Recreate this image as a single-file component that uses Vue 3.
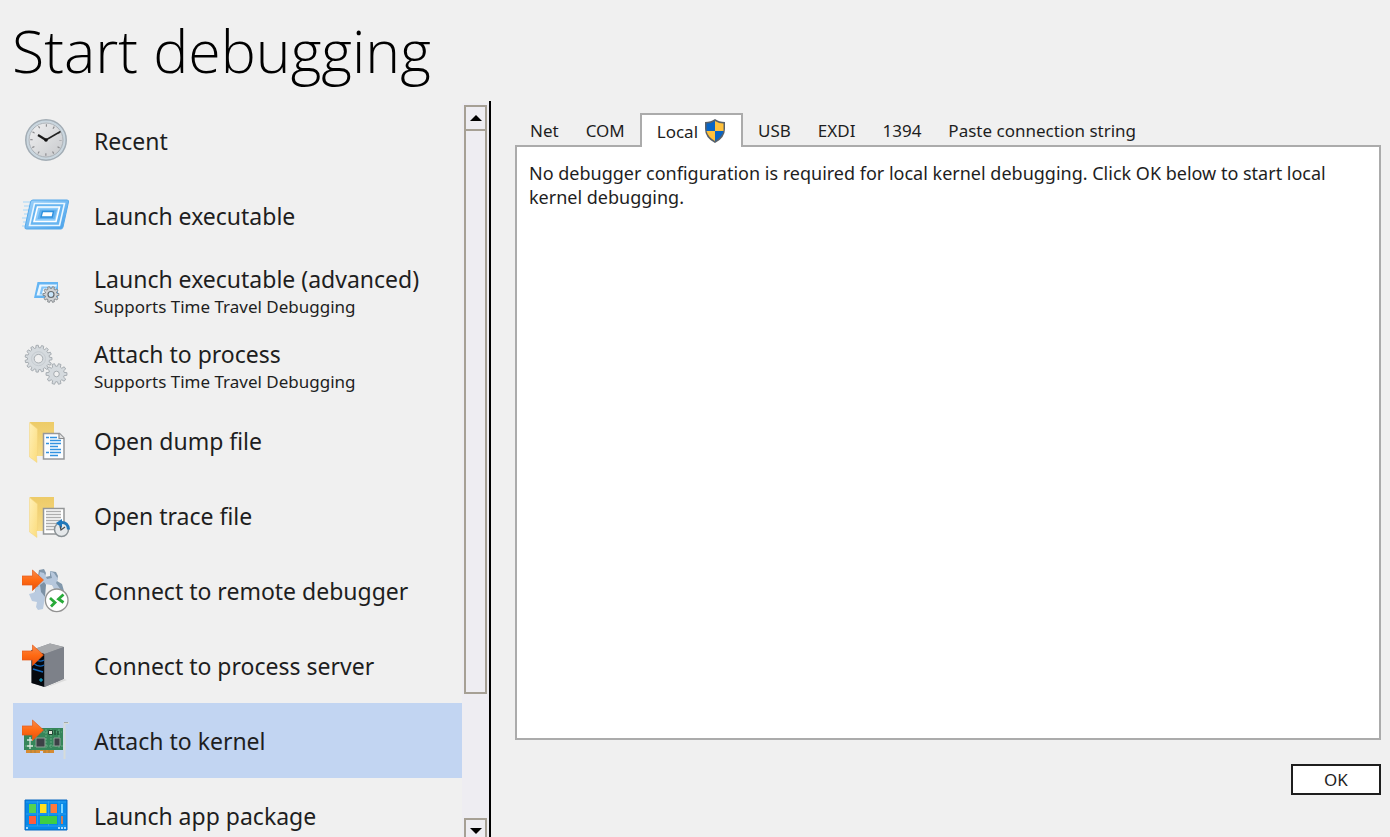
<script setup>
import { ref } from 'vue'

const items = [
  { id: 'recent', label: 'Recent' },
  { id: 'launch', label: 'Launch executable' },
  { id: 'advanced', label: 'Launch executable (advanced)', note: 'Supports Time Travel Debugging' },
  { id: 'process', label: 'Attach to process', note: 'Supports Time Travel Debugging' },
  { id: 'dump', label: 'Open dump file' },
  { id: 'trace', label: 'Open trace file' },
  { id: 'remote', label: 'Connect to remote debugger' },
  { id: 'server', label: 'Connect to process server' },
  { id: 'kernel', label: 'Attach to kernel' },
  { id: 'package', label: 'Launch app package' }
]
const tabs = ['Net', 'COM', 'Local', 'USB', 'EXDI', '1394', 'Paste connection string']
const selected = ref('kernel')
const activeTab = ref('Local')

function gear(cx, cy, outer, inner, teeth) {
  const points = []
  const step = (Math.PI * 2) / teeth
  for (let i = 0; i < teeth; i++) {
    const a = i * step
    for (const [offset, r] of [[-0.32, inner], [-0.2, outer], [0.2, outer], [0.32, inner]]) {
      const t = a + offset * step
      points.push(`${(cx + Math.cos(t) * r).toFixed(2)},${(cy + Math.sin(t) * r).toFixed(2)}`)
    }
  }
  return points.join(' ')
}
</script>

<template>
  <main class="page">
    <h1>Start debugging</h1>
    <div class="content">
      <nav class="sidebar" aria-label="Debugging options">
        <div class="list">
          <button
            v-for="item in items"
            :key="item.id"
            type="button"
            class="item"
            :class="{ selected: selected === item.id }"
            @click="selected = item.id"
          >
            <svg class="icon" viewBox="0 0 48 48" aria-hidden="true">
              <defs>
                <linearGradient :id="item.id + '-arrow'" x1="0" y1="0" x2="0" y2="1">
                  <stop offset="0" stop-color="#f58a4c" /><stop offset=".5" stop-color="#ff6a13" /><stop offset="1" stop-color="#e9500b" />
                </linearGradient>
                <linearGradient :id="item.id + '-folder'" x1="0" y1="0" x2="0" y2="1">
                  <stop offset="0" stop-color="#edcb68" /><stop offset="1" stop-color="#f7dc88" />
                </linearGradient>
                <linearGradient :id="item.id + '-flap'" x1="0" y1="0" x2="1" y2="1">
                  <stop offset="0" stop-color="#fff0b8" /><stop offset="1" stop-color="#fbdc7c" />
                </linearGradient>
                <linearGradient :id="item.id + '-blue'" x1="0" y1="0" x2="1" y2="1">
                  <stop offset="0" stop-color="#9ed3fb" /><stop offset="1" stop-color="#46a0ea" />
                </linearGradient>
                <linearGradient :id="item.id + '-face'" x1="0" y1="0" x2="1" y2="1">
                  <stop offset="0" stop-color="#f2f2f3" /><stop offset="1" stop-color="#c6c8cb" />
                </linearGradient>
              </defs>

              <g v-if="item.id === 'recent'">
                <circle cx="24" cy="24" r="20" fill="none" stroke="#a3adb5" stroke-width="2" />
                <circle cx="24" cy="24" r="18.5" fill="url(#recent-face)" stroke="#c9d6df" stroke-width="2" />
                <circle cx="24" cy="24" r="17" fill="none" stroke="#a9b1b8" />
                <circle cx="24" cy="24" r="14.5" fill="none" stroke="#8b8b8e" stroke-width="2.4" stroke-dasharray="1.2 6.39" stroke-dashoffset=".6" />
                <path d="M16 19l8 5" stroke="#1b1b1b" stroke-width="2.2" />
                <path d="M23 24.500l15.500-9" stroke="#222" stroke-width="1.500" />
                <circle cx="24" cy="24" r="1.800" fill="#111" />
              </g>

              <g v-else-if="item.id === 'launch'">
                <path d="M1 11h9M2 15h7M1 19h7M2 23h6M0 27h7M1 31h5M0 35h5" stroke="#a9d7fa" stroke-width="1.500" opacity=".7" />
                <path d="M11 9h34q2 0 1.500 2l-5.500 25q-.5 2-2 2H4.500q-2 0-1.500-2l5.500-25q.5-2 2.500-2z" fill="url(#launch-blue)" stroke="#56a9ea" />
                <path d="M12.500 12.500h30l-5 22H7.500z" fill="#67b5f1" stroke="#e8f6ff" stroke-width="1.600" />
                <path d="M15.500 16h22l-3.500 14.500H12z" fill="#8dccfb" stroke="#fff" stroke-width="1.600" />
                <path d="M18 18.500h17l-2.500 9.500H15.500z" fill="#65b2ef" />
                <path d="M20.500 20.500h11l-1.200 5.500H19z" fill="#fff" stroke="#2f92df" stroke-width="1.400" />
              </g>

              <g v-else-if="item.id === 'advanced'">
                <path d="M15.500 16H36v16H12z" fill="#65b5f3" />
                <path d="M17.500 18.500H35l-3 11H14.500z" fill="#e9f6ff" />
                <path d="M19.500 20.500H34l-2 8H17.500z" fill="#84c5f7" />
                <path d="M21.500 22.500H33l-2 5H20z" fill="#f8fcff" />
                <polygon :points="gear(29, 28.5, 8, 6, 10)" fill="#d0d3d5" stroke="#84898d" />
                <circle cx="29" cy="28.500" r="3" fill="#c9e5fa" stroke="#64696d" stroke-width="1.200" />
              </g>

              <g v-else-if="item.id === 'process'" fill="#d5dade" stroke="#a7adb2">
                <polygon :points="gear(16.500, 17.700, 13.500, 11, 15)" />
                <circle cx="16.500" cy="17.700" r="7" fill="none" stroke="#c6ccd1" />
                <circle cx="16.500" cy="17.700" r="4.300" fill="#f0f0f0" />
                <polygon :points="gear(34.500, 33, 10.500, 7.800, 10)" />
                <circle cx="34.500" cy="33" r="2.800" fill="#f0f0f0" />
              </g>

              <g v-else-if="item.id === 'dump' || item.id === 'trace'">
                <path d="M8 6h24v34H13z" :fill="`url(#${item.id}-folder)`" />
                <path d="M7.500 6.500l8 6.500v26l-1 1 .5 6.500-7.500-5.500z" :fill="`url(#${item.id}-flap)`" stroke="#f2d27b" stroke-width=".5" />
                <g v-if="item.id === 'dump'">
                  <path d="M21.500 17.500h16l4.500 4.500v21H21.500z" fill="#fbfdff" stroke="#96989a" stroke-width="1.500" />
                  <path d="M37 17.500v5h5" fill="#e1e1e1" stroke="#8b8c8e" stroke-width="1.200" />
                  <path d="M24 21.500h3M28 21.500h7M28 24.500h11M24 27.500h3M28 27.500h11M28 30.500h8M28 33.500h11M24 36.500h3M28 36.500h11M28 39.500h8" stroke="#3292e0" stroke-width="1.500" />
                </g>
                <g v-else>
                  <path d="M21.500 17.500H42V43H21.500z" fill="#fff" stroke="#949698" stroke-width="1.500" />
                  <path d="M24 20.500h15M24 23.500h15M24 26.500h15M24 29.500h15M24 32.500h11M24 35.500h9M24 38.500h8" stroke="#adadad" stroke-width="1.300" />
                  <circle cx="39.500" cy="38.500" r="7" fill="#e5e8ea" stroke="#8b9296" stroke-width="1.500" />
                  <path d="M39 31.500q7-.5 7.500 7" fill="none" stroke="#2177b8" stroke-width="3" />
                  <path d="M34 32l6-4v9z" fill="#1c78bf" />
                  <path d="M38 35l1 4 4-3" fill="none" stroke="#454b50" stroke-width="1.300" />
                </g>
              </g>

              <g v-else-if="item.id === 'remote'">
                <path d="M17 4l5-1 2 4-1 4 5-1v-5l6 1 2 4-1 5 5 3 2 7-7 1-3-6-7-3-5 5-1 10-6-5z" fill="#8298ac" />
                <path d="M18 6l4 1 3 6 5-1-2-7 4 2 4 6-2 4 5 7-6 1-3-6-8-1-3 6-4-5z" fill="#b6c7dc" />
                <path d="M11 20l8 1v4l4 6-1 6-1 6-5 1-2-3 1-5-5-1-3-7 4-1 3-2z" fill="#bacbe0" />
                <path d="M18 19l4-3 2 3-1 12-4-5z" fill="#7b91a5" />
                <circle cx="34.700" cy="34.300" r="11.300" fill="#fff" stroke="#929292" stroke-width="1.300" />
                <path d="M28 32l5 4.500-4 4M41.500 28.500l-5 4.500 5 3.500" fill="none" stroke="#28aa39" stroke-width="2.800" />
              </g>

              <g v-else-if="item.id === 'server'">
                <path d="M9.500 9L28 2.500 42 6v32l-19.500 8-13-4z" fill="#858991" />
                <path d="M9.500 9L28 2.500 42 6l-19.500 7z" fill="#a7a9ac" />
                <path d="M9.500 9l13 4v33l-13-4z" fill="#05080d" />
                <path d="M22.500 13L42 6v32l-19.500 8z" fill="#7d8189" />
                <path d="M11 17q6 5 11 2M11 22q6 5 11 2M11 28l10 3" fill="none" stroke="#1267bc" stroke-width="1.400" />
                <path d="M19 37v4M17 39h4" stroke="#18b8e7" />
                <path d="M42 38l3 1-22 8z" fill="#dcdcdc" />
              </g>

              <g v-else-if="item.id === 'kernel'">
                <path d="M4 33h28v4H4z" fill="#d78b32" />
                <path d="M9 33v4M13 33v4M23 33v4M27 33v4" stroke="#a9823b" />
                <path d="M18 35h3v3h-3z" fill="#c3d4f2" />
                <path d="M2 12h39v22H2z" fill="#35865a" />
                <path d="M3 16h37M24 13v19M29 13v19M37 13v19M3 30h38" stroke="#73b48a" stroke-width=".8" stroke-dasharray="2 1" />
                <path d="M14 22h9v9h-9zM32 22h6v8h-6z" fill="#3c4146" stroke="#8fa097" />
                <path d="M26.500 14.500h4v4h-4z" fill="#e1e4d9" stroke="#1f4532" />
                <path d="M5 24h6M8 21v6M5 30h6M8 27v6" stroke="#d6e5dc" stroke-width="1.300" />
                <path d="M33 14v5M36 15v4" stroke="#20553a" stroke-width="1.500" />
                <path d="M47 7h-4.500v36" fill="none" stroke="#d6dcd9" stroke-width="2" />
                <path d="M46 6.500h-4" stroke="#8b9492" stroke-width=".7" />
              </g>

              <g v-else>
                <path d="M3 9h42v30H3z" fill="#0789e8" stroke="#0868c3" />
                <path d="M4 11h40M4 23h40M4 35h40M15.500 10v25M26.500 10v25M37 10v25" stroke="#31a4f3" stroke-width=".8" />
                <path d="M7 13h7v9H7z" fill="#55d252" /><path d="M18 13h6.500v9H18z" fill="#ffdf1d" />
                <path d="M28.500 13H35v9h-6.500z" fill="#ff7939" /><path d="M39 13h2v9h-2z" fill="#7dd5ff" />
                <path d="M7 25h7v8H7z" fill="#ff5b3e" /><path d="M18 25h17v8H18z" fill="#3dce45" />
                <path d="M39 25h2v8h-2z" fill="#ce7c56" />
                <path d="M4 37h2M36 37h2M39 37h2M42 37h2" stroke="#e3f5ff" stroke-width="1.300" />
              </g>

              <path
                v-if="['remote', 'server', 'kernel'].includes(item.id)"
                d="M0 10h10.500V4l11 10-11 10.500V19H0z"
                :fill="`url(#${item.id}-arrow)`"
                stroke="#e75a18"
                stroke-width=".7"
              />
            </svg>
            <span class="caption">
              <span class="label">{{ item.label }}</span>
              <span v-if="item.note" class="note">{{ item.note }}</span>
            </span>
          </button>
        </div>
        <div class="scrollbar">
          <button type="button" class="step up" aria-label="Scroll up">
            <svg viewBox="0 0 12 6" aria-hidden="true"><path d="M0 6l6-6 6 6z" /></svg>
          </button>
          <div class="track"><div class="thumb"></div></div>
          <button type="button" class="step down" aria-label="Scroll down">
            <svg viewBox="0 0 12 6" aria-hidden="true"><path d="M0 0h12L6 6z" /></svg>
          </button>
        </div>
      </nav>

      <section class="details">
        <div class="tabs" role="tablist" aria-label="Kernel connection">
          <button
            v-for="tab in tabs"
            :key="tab"
            type="button"
            role="tab"
            class="tab"
            :class="{ active: activeTab === tab }"
            :aria-selected="activeTab === tab"
            @click="activeTab = tab"
          >
            <span>{{ tab }}</span>
            <svg v-if="tab === 'Local'" class="shield" viewBox="0 0 22 24" aria-hidden="true">
              <path d="M11 0q4 3 10 3v7q0 9-10 14Q1 19 1 10V3q6 0 10-3z" fill="#58616a" />
              <path d="M11 2v10H2.500V4.500Q7 4.500 11 2z" fill="#0864c4" />
              <path d="M11 2q4 2.500 8.500 2.500V12H11z" fill="#ffc13b" />
              <path d="M2.500 12H11v10q-7-4-8.500-10z" fill="#ffc13b" />
              <path d="M11 12h8.500Q18 18 11 22z" fill="#0864c4" />
            </svg>
          </button>
        </div>
        <div class="panel" role="tabpanel">
          <p>No debugger configuration is required for local kernel debugging. Click OK below to start local kernel debugging.</p>
        </div>
        <button type="button" class="ok">OK</button>
      </section>
    </div>
  </main>
</template>

<style>
body {
  margin: 0;
  background: #f0f0f0;
}
</style>

<style scoped>
.page {
  box-sizing: border-box;
  display: flex;
  flex-direction: column;
  height: 100vh;
  overflow: hidden;
  background: #f0f0f0;
  color: #1e1e1e;
  font-family: "Noto Sans", "Open Sans", sans-serif;
  font-size: 17px;
}
button {
  margin: 0;
  padding: 0;
  border: 0;
  background: none;
  color: inherit;
  font: inherit;
}
h1 {
  flex: none;
  margin: 0;
  padding: 0 12px;
  color: #000;
  font-family: "Open Sans", "Noto Sans", sans-serif;
  font-size: 59px;
  font-weight: 340;
  line-height: 101px;
}
.content {
  display: grid;
  grid-template-columns: 491px 1fr;
  flex: 1;
  min-height: 0;
}
.sidebar {
  display: grid;
  grid-template-columns: 1fr 27px;
  box-sizing: border-box;
  min-height: 0;
  margin-bottom: -7px;
  padding-left: 13px;
  border-right: 2px solid #000;
}
.list {
  min-height: 0;
  padding-top: 2px;
  overflow: hidden;
}
.item {
  display: flex;
  align-items: center;
  box-sizing: border-box;
  gap: 24px;
  width: 100%;
  height: 75px;
  padding: 0 9px 2px;
  text-align: left;
}
.item.selected {
  background: #c2d5f2;
}
.icon {
  flex: none;
  width: 48px;
  height: 48px;
}
.caption {
  display: flex;
  flex-direction: column;
  padding-top: 2px;
  white-space: nowrap;
}
.label {
  font-size: 23px;
  line-height: 32px;
}
.note {
  line-height: 24px;
}
.scrollbar {
  display: flex;
  flex-direction: column;
  min-height: 0;
  margin-top: 2px;
  padding: 2px 2px 0;
  background: #eeedf2;
}
.step {
  display: flex;
  align-items: center;
  justify-content: center;
  flex: none;
  box-sizing: border-box;
  height: 26px;
  border: 2px solid #a6a095;
}
.step svg {
  width: 12px;
  height: 6px;
}
.track {
  flex: 1;
  min-height: 0;
}
.thumb {
  box-sizing: border-box;
  height: 82%;
  border: 2px solid #a6a095;
  border-top: 0;
}
.details {
  display: flex;
  flex-direction: column;
  min-width: 0;
  padding: 12px 9px 42px 24px;
}
.tabs {
  display: flex;
  z-index: 1;
  height: 34px;
  margin-bottom: -2px;
}
.tab {
  display: flex;
  align-items: center;
  box-sizing: border-box;
  gap: 6px;
  padding: 0 12px 0 15px;
  white-space: nowrap;
}
.tab.active {
  margin-left: 3px;
  padding: 0 15px;
  border: 2px solid #ababab;
  border-bottom: 0;
  background: #fff;
}
.shield {
  width: 22px;
  height: 24px;
}
.panel {
  flex: 1;
  padding: 14px 12px;
  border: 2px solid #ababab;
  background: #fff;
}
p {
  margin: 0;
  font-size: 18px;
  line-height: 24px;
}
.ok {
  align-self: flex-end;
  width: 90px;
  height: 31px;
  margin-top: 24px;
  border: 2px solid #1e1e1e;
  background: #fff;
}
</style>
